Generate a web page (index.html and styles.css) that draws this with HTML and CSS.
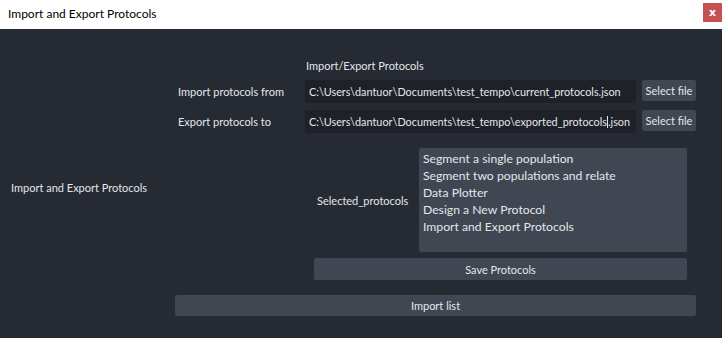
FILE: index.html
```html
<!DOCTYPE html>
<html lang="en">
<head>
    <meta charset="UTF-8">
    <title>Import and Export Protocols</title>
    <link rel="stylesheet" href="styles.css">
</head>
<body>
    <div class="titlebar">
        <span class="title">Import and Export Protocols</span>
        <button class="close">x</button>
    </div>

    <div class="main">
        <div class="side-label">Import and Export Protocols</div>

        <div class="content">
            <div class="heading">Import/Export Protocols</div>

            <div class="file-row">
                <span class="row-label">Import protocols from</span>
                <div class="path">C:\Users\dantuor\Documents\test_tempo\current_protocols.json</div>
                <button class="btn small">Select file</button>
            </div>
            <div class="file-row">
                <span class="row-label">Export protocols to</span>
                <div class="path">C:\Users\dantuor\Documents\test_tempo\exported_protocols<span class="caret"></span>.json</div>
                <button class="btn small">Select file</button>
            </div>

            <div class="select-area">
                <div class="select-row">
                    <span class="select-label">Selected_protocols</span>
                    <ul class="protocol-list">
                        <li>Segment a single population</li>
                        <li>Segment two populations and relate</li>
                        <li>Data Plotter</li>
                        <li>Design a New Protocol</li>
                        <li>Import and Export Protocols</li>
                    </ul>
                </div>
                <button class="btn wide">Save Protocols</button>
            </div>

            <button class="btn import">Import list</button>
        </div>
    </div>
</body>
</html>
```

FILE: styles.css
```css
body { margin: 0; background-color: #262a33; color: #e4e6ea; font-family: Lato, 'Open Sans', sans-serif; font-size: 11px; overflow: hidden; height: 338px; }

.titlebar {
    height: 29px; background: #ffffff; color: #000;
    display: flex; align-items: center; justify-content: space-between;
}
.title { padding-left: 8px; font-size: 12px; margin-top: -2px; }
.close {
    width: 19px; height: 19px; margin-top: -4px; padding: 0; border: none;
    background: #c65152; color: #fff; font-weight: bold; font-size: 11px;
    font-family: 'DejaVu Sans', sans-serif; line-height: 17px;
}

.main { display: flex; height: 309px; }
.side-label { width: 164px; padding-left: 11px; align-self: center; margin-top: 8px; }

.content { width: 521px; display: flex; flex-direction: column; padding-top: 28px; }
.heading { margin-left: 131px; height: 18px; line-height: 18px; margin-bottom: 5px; }

.file-row { display: flex; align-items: center; height: 23px; margin-bottom: 7px; }
.row-label { width: 130px; padding-left: 3px; box-sizing: border-box; }
.path {
    width: 331px; height: 23px; line-height: 23px; background: #1e2128;
    border-radius: 2px; padding-left: 4px; box-sizing: border-box;
    white-space: nowrap; overflow: hidden; font-size: 10.85px;
}
.caret { display: inline-block; width: 1px; height: 12px; background: #e4e6ea; vertical-align: -2px; }

.btn {
    background: #404652; color: #e4e6ea; border: none; border-radius: 2px;
    font-family: inherit; font-size: inherit; padding: 0; cursor: pointer;
}
.small { width: 54px; height: 21px; margin-left: 6px; margin-top: -2px; }

.select-area { margin-left: 139px; width: 373px; margin-top: 8px; }
.select-row { display: flex; align-items: center; }
.select-label { width: 105px; padding-left: 3px; box-sizing: border-box; }
.protocol-list {
    list-style: none; margin: 0; padding: 2px 0 0 4px; width: 268px; height: 104px;
    box-sizing: border-box; background: #404652; border-radius: 2px; font-size: 12.2px;
}
.protocol-list li { height: 17px; line-height: 17px; }
.wide { width: 373px; height: 22px; margin-top: 6px; display: block; }

.import { width: 521px; height: 21px; margin-top: 15px; }
```
